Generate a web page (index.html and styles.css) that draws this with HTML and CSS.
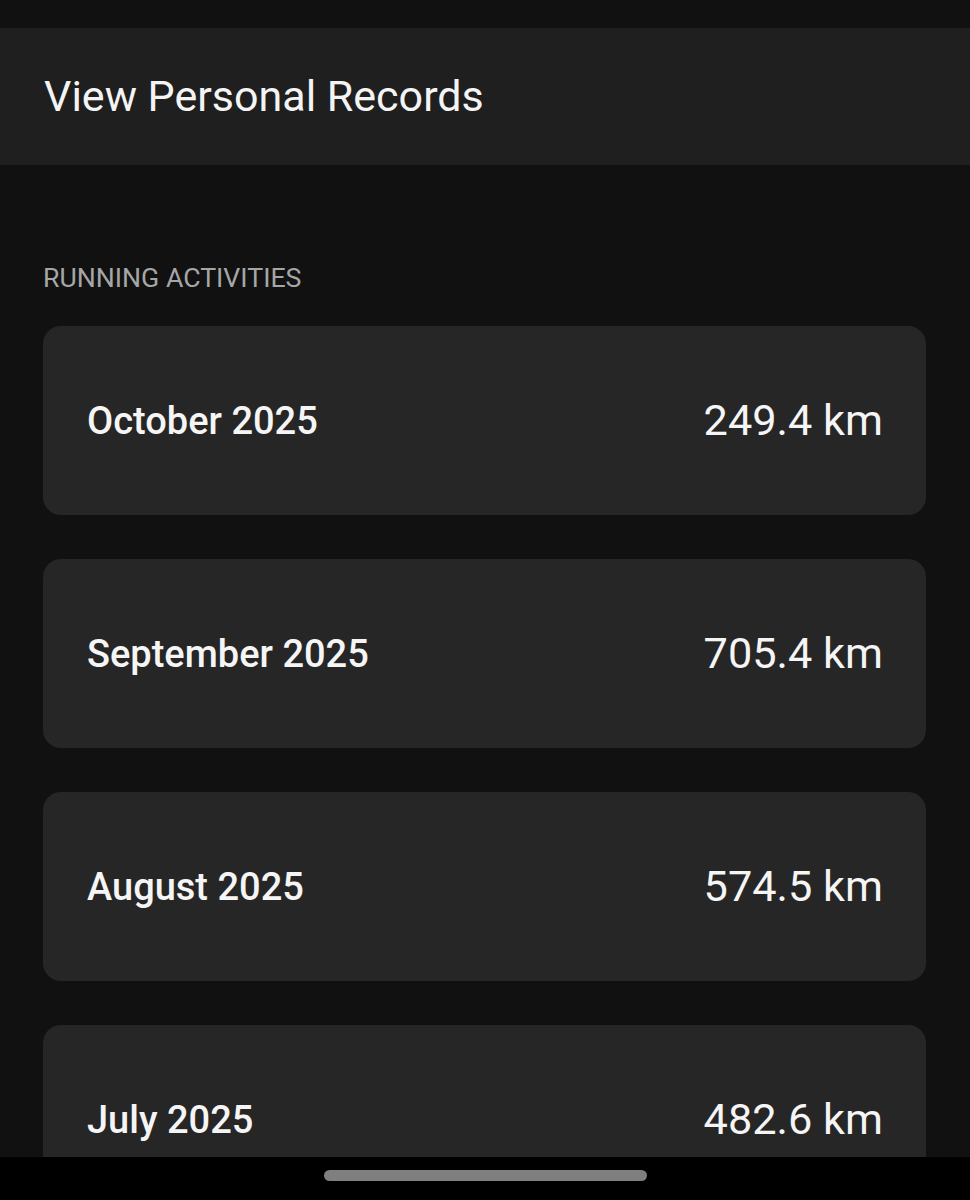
FILE: index.html
```html
<!DOCTYPE html>
<html>
<head>
  <title>View Personal Records</title>
  <link rel="stylesheet" href="styles.css">
</head>
<body>
  <div class="screen">
    <div class="status-strip"></div>

    <div class="app-bar">
      <h1>View Personal Records</h1>
    </div>

    <div class="content">
      <div class="section-label">RUNNING ACTIVITIES</div>

      <div class="month-list">
        <div class="month-card">
          <span class="month-name">October 2025</span>
          <span class="month-distance">249.4 km</span>
        </div>
        <div class="month-card">
          <span class="month-name">September 2025</span>
          <span class="month-distance">705.4 km</span>
        </div>
        <div class="month-card">
          <span class="month-name">August 2025</span>
          <span class="month-distance">574.5 km</span>
        </div>
        <div class="month-card">
          <span class="month-name">July 2025</span>
          <span class="month-distance">482.6 km</span>
        </div>
      </div>
    </div>

    <div class="nav-bar">
      <div class="nav-handle"></div>
    </div>
  </div>
</body>
</html>
```

FILE: styles.css
```css
body {
  margin: 0;
  padding: 0;
  background: #111111;
  font-family: Roboto, 'Noto Sans', sans-serif;
  color: #f2f2f2;
}

.screen {
  height: 1200px;
  display: flex;
  flex-direction: column;
  overflow: hidden;
}

.status-strip {
  height: 28px;
  flex-shrink: 0;
  background: #111111;
}

.app-bar {
  height: 137px;
  flex-shrink: 0;
  display: flex;
  align-items: center;
  padding: 0 44px;
  background: #1f1f1f;
}

.app-bar h1 {
  margin: 0;
  font-size: 43px;
  font-weight: 400;
  line-height: 1;
  color: #f4f4f4;
}

.content {
  flex: 1;
  min-height: 0;
  overflow: hidden;
  padding: 98px 44px 0 43px;
}

.section-label {
  font-size: 26.7px;
  line-height: 30px;
  color: #a6a6a6;
  margin-bottom: 33px;
}

.month-list {
  display: flex;
  flex-direction: column;
  gap: 44px;
}

.month-card {
  height: 189px;
  flex-shrink: 0;
  display: flex;
  align-items: center;
  justify-content: space-between;
  padding: 0 43px 0 44px;
  background: #262626;
  border-radius: 18px;
}

.month-name {
  font-size: 38px;
  font-weight: 500;
  color: #f5f5f5;
}

.month-distance {
  font-size: 43.3px;
  font-weight: 400;
  color: #f5f5f5;
}

.nav-bar {
  height: 43px;
  flex-shrink: 0;
  display: flex;
  justify-content: center;
  padding-top: 13px;
  box-sizing: border-box;
  background: #000000;
}

.nav-handle {
  width: 323px;
  height: 11px;
  border-radius: 6px;
  background: #7f7f7f;
}
```
